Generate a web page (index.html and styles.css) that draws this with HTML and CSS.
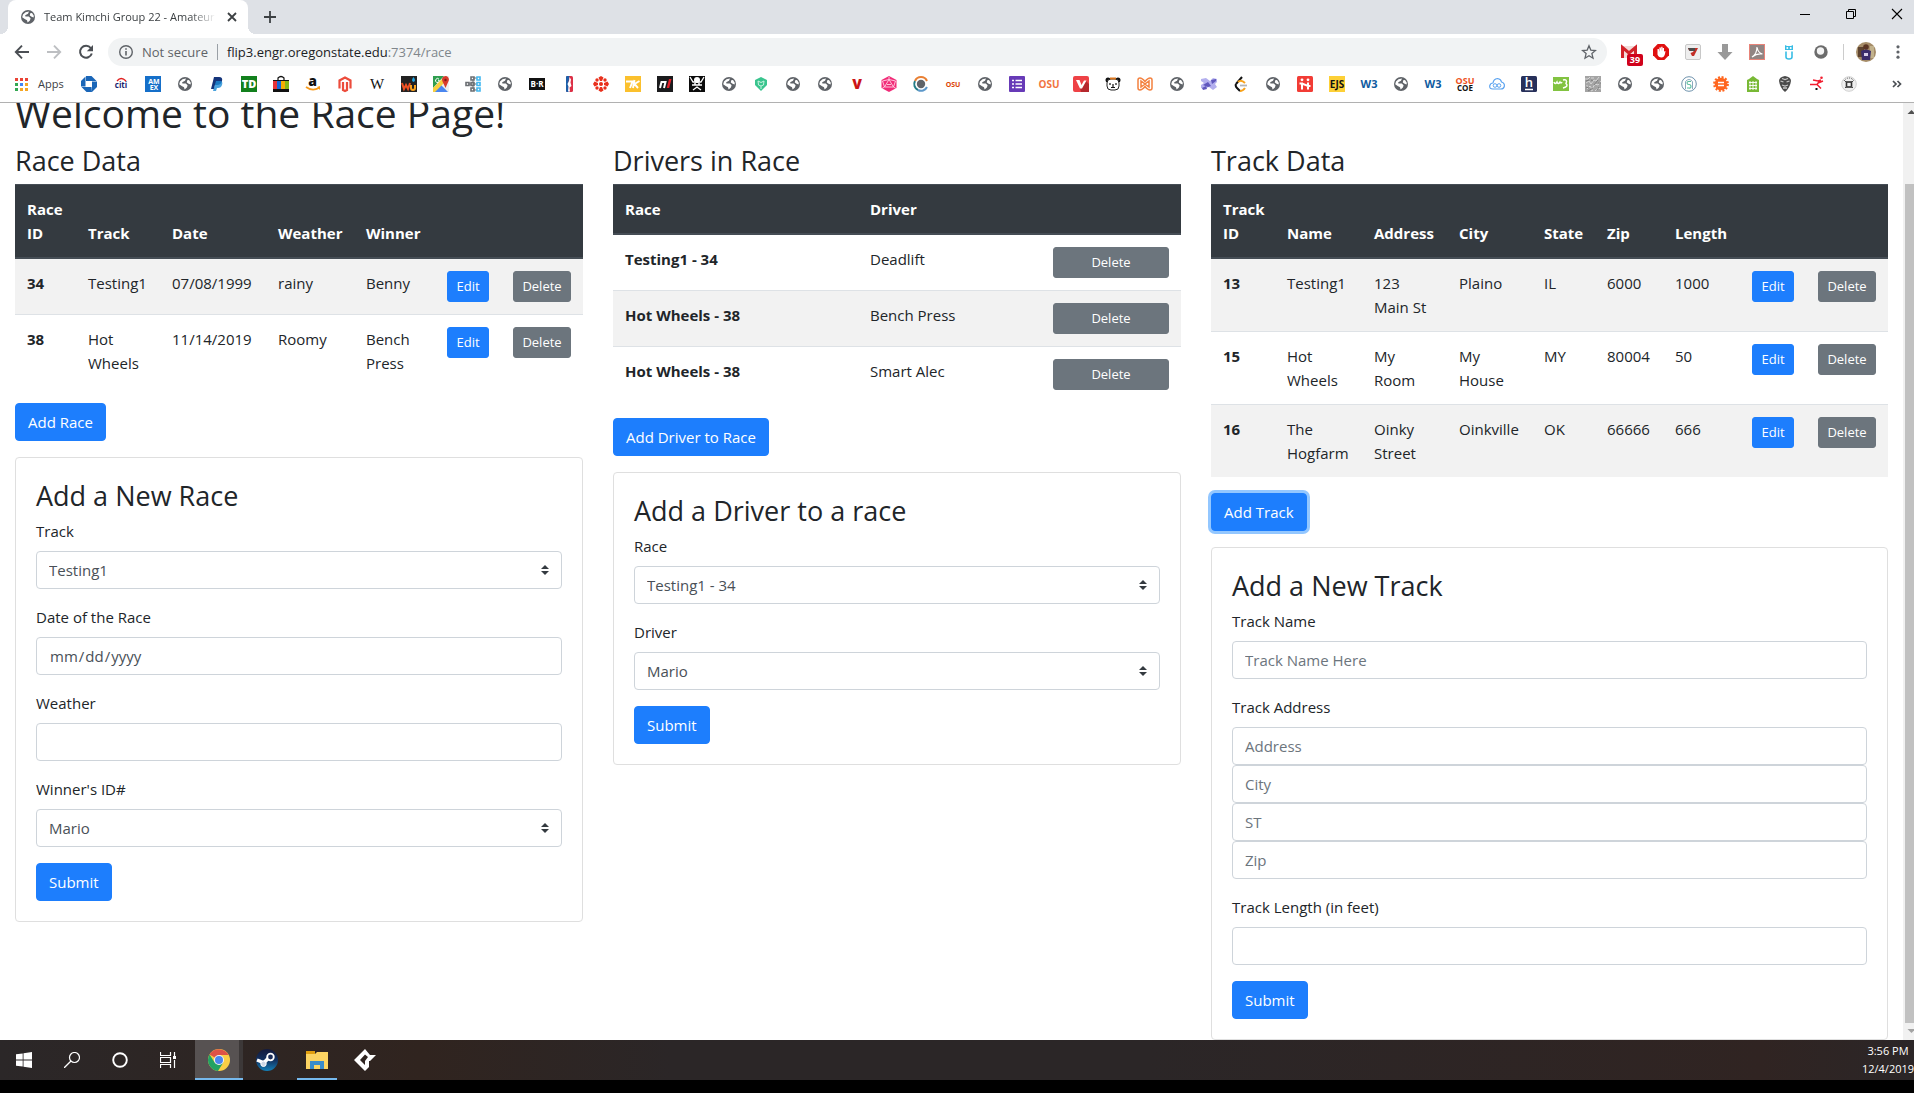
FILE: index.html
```html
<!DOCTYPE html>
<html lang="en">
<head>
<meta charset="utf-8">
<meta name="viewport" content="width=device-width, initial-scale=1">
<title>Team Kimchi Group 22 - Amateur Racing</title>
<link rel="stylesheet" href="styles.css">
</head>
<body>
<svg class="defs" aria-hidden="true">
  <symbol id="globe" viewBox="0 0 16 16"><circle cx="8" cy="8" r="7" fill="#5f6368"/><path d="M3 5.500 5.500 3.200 9 2.600 8 4.800 5.200 6.200 5.400 7.400 8.800 7.600 10.600 9.300 9.900 11.500 7.600 13.600 7 11.200 4.700 10 2.200 8.200ZM10.200 4.200 12 4 13.800 6.800 13.600 8.600 11.600 7.800 9.800 6.400Z" fill="#fff"/></symbol>
</svg>

<header class="browser">
  <div class="tabstrip">
    <div class="tab">
      <svg class="i16" viewBox="0 0 16 16"><use href="#globe"/></svg>
      <span class="tab-title">Team Kimchi Group 22 - Amateur Racing</span>
      <button class="plain" aria-label="Close tab"><svg class="i16" viewBox="0 0 16 16"><path d="M4 4l8 8M12 4l-8 8" stroke="#3c4043" stroke-width="1.8"/></svg></button>
    </div>
    <button class="plain new-tab" aria-label="New tab"><svg class="i16" viewBox="0 0 16 16"><path d="M8 2v12M2 8h12" stroke="#3c4043" stroke-width="1.8"/></svg></button>
    <div class="window-controls">
      <button class="plain" aria-label="Minimize"><svg class="i16" viewBox="0 0 16 16"><path d="M3 8.500h10" stroke="#000"/></svg></button>
      <button class="plain" aria-label="Restore"><svg class="i16" viewBox="0 0 16 16"><path d="M3.500 5.500h7v7h-7zM5.500 5.500v-2h7v7h-2" fill="none" stroke="#000"/></svg></button>
      <button class="plain" aria-label="Close"><svg class="i16" viewBox="0 0 16 16"><path d="M3 3l10 10M13 3l-10 10" stroke="#000" stroke-width="1.1"/></svg></button>
    </div>
  </div>

  <div class="toolbar">
    <div class="nav">
      <button class="plain" aria-label="Back"><svg class="i16" viewBox="0 0 16 16"><path d="M15 8H2M8 1.700 1.800 8 8 14.300" fill="none" stroke="#4b4f54" stroke-width="1.900"/></svg></button>
      <button class="plain" aria-label="Forward"><svg class="i16" viewBox="0 0 16 16"><path d="M1 8h13M8 1.700 14.200 8 8 14.300" fill="none" stroke="#bdbfc2" stroke-width="1.900"/></svg></button>
      <button class="plain" aria-label="Reload"><svg class="i16" viewBox="0 0 16 16"><path d="M12.800 4A6 6 0 1 0 13.800 9.500" fill="none" stroke="#4b4f54" stroke-width="2"/><path d="M15 1v6.200H8.800z" fill="#4b4f54"/></svg></button>
    </div>
    <div class="omnibox">
      <svg class="i16" viewBox="0 0 16 16"><circle cx="8" cy="8" r="6.300" fill="none" stroke="#5f6368" stroke-width="1.400"/><path d="M8 7v4.500M8 4.300v1.500" stroke="#5f6368" stroke-width="1.600"/></svg>
      <span class="secure">Not secure</span>
      <span class="url">flip3.engr.oregonstate.edu<span class="path">:7374/race</span></span>
      <button class="plain star" aria-label="Bookmark"><svg class="i16" viewBox="0 0 16 16"><path d="M8 1.800l1.800 4.300 4.700.4-3.600 3.100 1.100 4.600L8 11.700l-4 2.500 1.100-4.600L1.500 6.500l4.700-.4z" fill="none" stroke="#5f6368" stroke-width="1.300"/></svg></button>
    </div>
    <div class="extensions">
      <div class="mail"><svg class="i16" viewBox="0 0 16 16"><path d="M0 2h16v12H0z" fill="#f3dcda"/><path d="M1.500 14V3.500L8 9l6.500-5.500V14" fill="none" stroke="#d2232a" stroke-width="3"/></svg><span class="count">39</span></div>
      <svg class="i16" viewBox="0 0 16 16"><path d="M4.700 0h6.600L16 4.700v6.600L11.300 16H4.700L0 11.300V4.700z" fill="#e01010"/><path d="M4.500 7v3.500q1 3 4 3 2.500 0 3.500-3.500l.5-3-1.500.5V4H9.800v3.500L9.500 2.700H8.200v4.500L7.800 3.500H6.400V8L5.800 5H4.500z" fill="#fff"/></svg>
      <svg class="i16" viewBox="0 0 16 16"><rect x=".5" y=".5" width="15" height="15" rx="1.500" fill="#eee" stroke="#c8c8c8"/><path d="M3 4h10L9 12H7L5.500 9 8 8 9 6.500H4z" fill="#c32d26"/><path d="M3 4h7v3H4.500z" fill="#4c4c4c"/></svg>
      <svg class="i16" viewBox="0 0 16 16"><path d="M5 0h6v8h4.500L8 16 .5 8H5z" fill="#999"/></svg>
      <svg class="i16" viewBox="0 0 16 16"><rect x=".5" y=".5" width="15" height="15" fill="#918583" stroke="#e88378"/><path d="M3 13q5-3 5-10 1 6 5.500 7Q8 9 3 13z" fill="none" stroke="#fff" stroke-width="1.200"/></svg>
      <svg class="i16" viewBox="0 0 16 16"><path d="M5 7.500v5.500q0 2 3 2t3-2V7.500" fill="none" stroke="#39bde5" stroke-width="1.600"/><path d="M4 1l2 1h4l2-1v5H4z" fill="#39bde5"/><circle cx="6.300" cy="4" r="1" fill="#fff"/><circle cx="9.700" cy="4" r="1" fill="#fff"/></svg>
      <svg class="i16" viewBox="0 0 16 16"><circle cx="8" cy="8" r="6.700" fill="#6c6c6c"/><circle cx="7.500" cy="7" r="3.700" fill="#f4f4f4"/></svg>
    </div>
    <div class="profile">
      <svg class="avatar" viewBox="0 0 20 20"><circle cx="10" cy="10" r="10" fill="#a58c68"/><path d="M2 5h6v10H2z" fill="#5d4330"/><path d="M14 4h4v12h-4z" fill="#c2b28c"/><circle cx="10" cy="5" r="2.800" fill="#5a3524"/><path d="M5 9q5-3 10 0l-1 9H6z" fill="#3b2d6b"/><path d="M8 11h4v3H8z" fill="#d8cfe8"/></svg>
      <button class="plain" aria-label="Menu"><svg class="i16" viewBox="0 0 16 16"><g fill="#5f6368"><circle cx="8" cy="2.800" r="1.600"/><circle cx="8" cy="8" r="1.600"/><circle cx="8" cy="13.200" r="1.600"/></g></svg></button>
    </div>
  </div>

  <nav class="bookmarks" aria-label="Bookmarks">
    <a class="apps" href="#"><svg class="apps-grid" viewBox="0 0 13 13"><path d="M0 0h3v3H0zM5 0h3v3H5zM10 0h3v3h-3z" fill="#ea4335"/><path d="M0 5h3v3H0zM0 10h3v3H0z" fill="#34a853"/><path d="M5 5h3v3H5z" fill="#4285f4"/><path d="M10 5h3v3h-3zM5 10h3v3H5zM10 10h3v3h-3z" fill="#f5a623"/></svg>Apps</a>
    <a href="#"><svg viewBox="0 0 16 16"><g fill="#1a66b8"><path d="M5 0h5.500l5 5H5z"/><path d="M16 5.500v5.500l-5 5V5.500z"/><path d="M11 16H5.500l-5-5H10.500z"/><path d="M0 10.500V5l4.500-4.500v10z"/></g><path d="M5.500 5.500h5v5h-5z" fill="#fff"/></svg></a>
    <a href="#"><svg viewBox="0 0 16 16"><text x="8" y="12" class="t" font-size="8" font-weight="700" fill="#1a1f71">citi</text><path d="M4 5q4-5 9 0" fill="none" stroke="#e02020" stroke-width="1.300"/></svg></a>
    <a href="#"><svg viewBox="0 0 16 16"><path d="M0 0h16v16H0z" fill="#156fc9"/><text x="9" y="8" class="t" font-size="7" font-weight="700" fill="#fff">AM</text><text x="9" y="14" class="t" font-size="7" font-weight="700" fill="#fff">EX</text></svg></a>
    <a href="#"><svg viewBox="0 0 16 16"><use href="#globe"/></svg></a>
    <a href="#"><svg viewBox="0 0 16 16"><path d="M5 1h5q4 0 3 4t-5 4H6l-1 4H2z" fill="#14347a"/><path d="M7 5h5q2 1 1 4t-4 3H8l-1 3H4z" fill="#1b8bd4" opacity=".8"/></svg></a>
    <a href="#"><svg viewBox="0 0 16 16"><path d="M0 0h16v16H0z" fill="#12801d"/><text x="8" y="12" class="t" font-size="11" font-weight="800" fill="#fff">TD</text></svg></a>
    <a href="#"><svg viewBox="0 0 16 16"><path d="M5 5V2q3-3 6 0v3" fill="none" stroke="#111" stroke-width="1.200"/><path d="M0 4h16v12H0z" fill="#111"/><path d="M0 5h4v8H0z" fill="#e53238"/><path d="M4 5h4v8H4z" fill="#1468d8"/><path d="M8 5h4v8H8z" fill="#f5af02"/><path d="M12 5h4v8h-4z" fill="#86b817"/></svg></a>
    <a href="#"><svg viewBox="0 0 16 16"><text x="7.500" y="10" class="t" font-size="14" font-weight="800" fill="#111">a</text><path d="M1 11q6 4.500 13 1" fill="none" stroke="#f79a1c" stroke-width="1.700"/><path d="M15 10v4l-3-3z" fill="#f79a1c"/></svg></a>
    <a href="#"><svg viewBox="0 0 16 16"><path d="M2.500 12.500v-8L8 1.500l5.500 3v8M6 6v8l2 1 2-1V6" fill="none" stroke="#ec4c3c" stroke-width="2.200"/></svg></a>
    <a href="#"><svg viewBox="0 0 16 16"><text x="8" y="13" class="serif" font-size="15" fill="#111">W</text></svg></a>
    <a href="#"><svg viewBox="0 0 16 16"><path d="M0 0h16v16H0z" fill="#222"/><path d="M1 7l2 6 2-4 2 4 2-6" fill="none" stroke="#f05023" stroke-width="2"/><path d="M10 9v3q0 2 2 2t2-2V9" fill="none" stroke="#f9a01b" stroke-width="2"/><path d="M12.500 1q3 4 0 5-3-1 0-5" fill="#20a7e8"/></svg></a>
    <a href="#"><svg viewBox="0 0 16 16"><path d="M0 0h16v16H0z" fill="#eef0ee"/><path d="M0 0h11L0 12z" fill="#2f9e4f"/><path d="M6 3.200a2 2 0 1 0 .5 1.500H5" fill="none" stroke="#fff"/><path d="M1 16l7-7 7 7z" fill="#4a86ef"/><path d="M0 12L9 3l2 4L2 16H0z" fill="#f7cf3e"/><path d="M12.500 0a3.500 3.500 0 0 1 3.300 4.500L12.500 12 9.300 5A3.500 3.500 0 0 1 12.500 0z" fill="#d83b2c"/><circle cx="12.500" cy="4" r="1.200" fill="#7d1d14"/></svg></a>
    <a href="#"><svg viewBox="0 0 16 16"><path d="M3 8h4M8 3v10M8 2h4M8 8h4M8 14h4" stroke="#6b6f73"/><g fill="none" stroke="#6b6f73" stroke-width="1.600"><path d="M1 6.500h3v3H1zM6 1h3v3H6zM6 6.500h3v3H6zM6 12h3v3H6z"/></g><g fill="none" stroke="#43b8f0" stroke-width="1.600"><path d="M12 1h3v3h-3zM12 6.500h3v3h-3zM12 12h3v3h-3z"/></g></svg></a>
    <a href="#"><svg viewBox="0 0 16 16"><use href="#globe"/></svg></a>
    <a href="#"><svg viewBox="0 0 16 16"><path d="M0 2h16v12H0z" fill="#111"/><text x="8" y="11" class="t" font-size="8" font-weight="700" fill="#fff">B·R</text></svg></a>
    <a href="#"><svg viewBox="0 0 16 16"><rect x="5" y="0" width="7" height="16" rx="1.500" fill="#dc3046"/><path d="M6 0h2.500L7.500 6 8 16H6q-1 0-1-1V1q0-1 1-1z" fill="#1d5fa8"/><path d="M8.500 1l1.500 2.500-.5 3 1 3.500-2 1.500.5 4H7l.5-5L6.500 8 8 5z" fill="#fff"/></svg></a>
    <a href="#"><svg viewBox="0 0 16 16"><g fill="#e9301c"><path d="M8 0l2.500 1.500L9 5H7L5.500 1.500zM8 16l2.500-1.500L9 11H7l-1.500 3.500zM0 8l1.500-2.500L5 7v2l-3.500 1.500zM16 8l-1.500-2.500L11 7v2l3.500 1.500z"/><circle cx="4" cy="4" r="1.700"/><circle cx="12" cy="4" r="1.700"/><circle cx="4" cy="12" r="1.700"/><circle cx="12" cy="12" r="1.700"/><circle cx="8" cy="8" r="2"/></g></svg></a>
    <a href="#"><svg viewBox="0 0 16 16"><path d="M0 0h16v16H0z" fill="#fbc02d"/><path d="M1 5.500h6.500L5 12M14.500 5L9.500 8l3.500 4M9.500 4L8 12" fill="none" stroke="#fff" stroke-width="1.900"/></svg></a>
    <a href="#"><svg viewBox="0 0 16 16"><path d="M0 0h16v16H0z" fill="#1b1b1d"/><path d="M3 12l1.500-6h4L7 12" fill="none" stroke="#fff" stroke-width="2"/><path d="M12 3h2.500l-2.300 9H9.700z" fill="#e3202a"/></svg></a>
    <a href="#"><svg viewBox="0 0 16 16"><path d="M0 0h16v16H0z" fill="#0b0b0b"/><circle cx="8" cy="4" r="3" fill="#fff"/><path d="M1 1l3 5h8l3-5M3 9h10M4 14l4-3 4 3" fill="none" stroke="#fff" stroke-width="1.300"/><circle cx="6" cy="8" r="1" fill="#fff"/><circle cx="10" cy="8" r="1" fill="#fff"/></svg></a>
    <a href="#"><svg viewBox="0 0 16 16"><use href="#globe"/></svg></a>
    <a href="#"><svg viewBox="0 0 16 16"><path d="M2 4l6-3 6 3v5l-6 6-6-6z" fill="#39c48e"/><path d="M5 5l3 1.500L11 5M5 5l.5 4L8 10l2.500-1 .5-4M8 10v3" fill="none" stroke="#c9f3e0"/></svg></a>
    <a href="#"><svg viewBox="0 0 16 16"><use href="#globe"/></svg></a>
    <a href="#"><svg viewBox="0 0 16 16"><use href="#globe"/></svg></a>
    <a href="#"><svg viewBox="0 0 16 16"><text x="8" y="13" class="t" font-size="14" font-weight="800" fill="#cc1417">V</text></svg></a>
    <a href="#"><svg viewBox="0 0 16 16"><path d="M8 0l7.500 4v8L8 16 .5 12V4z" fill="#f12c78"/><path d="M8 3.500L3.500 11h9zM8 3.500V1M3.500 11L1 12.500M12.500 11l2.500 1.500M6 8.500h4M3.500 11L1.500 5 8 3.500 14.500 5l-2 6" fill="none" stroke="#ffd0e2" stroke-width=".9"/></svg></a>
    <a href="#"><svg viewBox="0 0 16 16"><g fill="none" stroke-width="2"><path d="M2 5a6.500 6.500 0 0 1 12 0" stroke="#e98034"/><path d="M2 5a6.500 6.500 0 0 0 3 9" stroke="#237c86"/><path d="M5 14a6.500 6.500 0 0 0 9-3" stroke="#5d98ca"/></g><circle cx="8" cy="8" r="4.200" fill="#5f6368"/></svg></a>
    <a href="#"><svg viewBox="0 0 16 16"><text x="8" y="11" class="t" font-size="7" font-weight="700" fill="#dc4405">OSU</text></svg></a>
    <a href="#"><svg viewBox="0 0 16 16"><use href="#globe"/></svg></a>
    <a href="#"><svg viewBox="0 0 16 16"><rect width="16" height="16" rx="1" fill="#673ab7"/><path d="M3 4.500h2M6.500 4.500H13M3 8h2M6.500 8H13M3 11.500h2M6.500 11.500H13" stroke="#fff" stroke-width="1.700"/></svg></a>
    <a href="#"><svg viewBox="0 0 16 16"><text x="8" y="12" class="narrow-text" font-size="10" font-weight="700" fill="#f1743f">OSU</text></svg></a>
    <a href="#"><svg viewBox="0 0 16 16"><rect width="16" height="16" rx="2" fill="#ee4246"/><path d="M13 5l3 3v8H8l-1-4z" fill="#b5282e"/><path d="M3 4h3.500l2 5L11 4.500h2.500L9 12.500H7z" fill="#fff"/></svg></a>
    <a href="#"><svg viewBox="0 0 16 16"><circle cx="3" cy="4" r="2.500" fill="#111"/><circle cx="13" cy="4" r="2.500" fill="#111"/><rect x="2" y="3" width="12" height="11" rx="4" fill="#fff" stroke="#222"/><path d="M5 2.500h6" stroke="#d8741d" stroke-width="2" fill="none"/><path d="M5 7v2M11 7v2M6 11.500h4M8 8v3" stroke="#111" stroke-width="1.200"/></svg></a>
    <a href="#"><svg viewBox="0 0 16 16"><g fill="none" stroke="#f4813f" stroke-width="1.500"><path d="M1 4q0-2 2-2 2 0 5 3.500Q11 2 13 2q2 0 2 2v8q0 2-2 2-2 0-5-3.500Q5 14 3 14q-2 0-2-2z"/><path d="M4 5v6l4-3zM12 5v6L8 8z"/></g></svg></a>
    <a href="#"><svg viewBox="0 0 16 16"><use href="#globe"/></svg></a>
    <a href="#"><svg viewBox="0 0 16 16"><path d="M0 3l5-1 4 3 3-3 4 1v3l-2 2 2 3-4 3-4-3-5 2-3-1v-3l3-2-3-2z" fill="#b3afee"/><path d="M2 9l5-3 3 4-3 1zM10 4l5-1v2l-4 3zM1 12l4-2 1 3-4 1z" fill="#6058bd"/></svg></a>
    <a href="#"><svg viewBox="0 0 16 16"><path d="M9 1L3 8" stroke="#111" stroke-width="2"/><path d="M3 8q-1 2 1 4l3 3" fill="none" stroke="#111" stroke-width="2"/><path d="M5 6q3-3 7 1M7 15q3 0 5-3" fill="none" stroke="#f8a21a" stroke-width="2"/><path d="M7 9.500h7" stroke="#b3b3b3" stroke-width="1.800"/></svg></a>
    <a href="#"><svg viewBox="0 0 16 16"><use href="#globe"/></svg></a>
    <a href="#"><svg viewBox="0 0 16 16"><rect width="16" height="16" rx="1.500" fill="#f23c35"/><path d="M5 6.500v7M11 6.500v7M2.500 7.500H5l6 2.500h2.500" fill="none" stroke="#fff" stroke-width="2"/><circle cx="5" cy="3.800" r="1.400" fill="#fff"/><circle cx="11" cy="3.800" r="1.400" fill="#fff"/></svg></a>
    <a href="#"><svg viewBox="0 0 16 16"><path d="M0 0h16v16H0z" fill="#fdd036"/><text x="8" y="12" class="narrow-text" font-size="10" font-weight="700" fill="#111">EJS</text></svg></a>
    <a href="#"><svg viewBox="0 0 16 16"><text x="8" y="12" class="narrow-text" font-size="11" font-weight="700" fill="#0f5b9f">W3</text></svg></a>
    <a href="#"><svg viewBox="0 0 16 16"><use href="#globe"/></svg></a>
    <a href="#"><svg viewBox="0 0 16 16"><text x="8" y="12" class="narrow-text" font-size="11" font-weight="700" fill="#0f5b9f">W3</text></svg></a>
    <a href="#"><svg viewBox="0 0 16 16"><text x="8" y="8" class="narrow-text" font-size="9" font-weight="700" fill="#ee5322">OSU</text><text x="8" y="15" class="narrow-text" font-size="8" font-weight="700" fill="#111">COE</text></svg></a>
    <a href="#"><svg viewBox="0 0 16 16"><path d="M4 13Q0 13 .8 9.500 1.500 7 4 7q.5-4 4.500-4.500Q12 3 12.500 6q3.500 1 2.800 4.500Q14.500 13 12 13z" fill="none" stroke="#5ba3f0" stroke-width="1.200"/><circle cx="6" cy="9.500" r="1.800" fill="none" stroke="#5ba3f0"/><circle cx="10" cy="9.500" r="1.800" fill="none" stroke="#5ba3f0"/></svg></a>
    <a href="#"><svg viewBox="0 0 16 16"><rect width="16" height="16" rx="1.500" fill="#27305a"/><text x="8" y="11" class="t" font-size="13" font-weight="600" fill="#fff">h</text><path d="M4 13.500h8" stroke="#fff" stroke-width="1.500"/></svg></a>
    <a href="#"><svg viewBox="0 0 16 16"><path d="M0 1h16v14H0z" fill="#82c341"/><path d="M1 6q1 3 3 0 1 3 3 0 1 2 2 0M10 4q5-1 3 3.500 3 3-3 4.500" fill="none" stroke="#fff" stroke-width="1.500"/></svg></a>
    <a href="#"><svg viewBox="0 0 16 16"><path d="M0 0h16v16H0z" fill="#a4a4a4"/><path d="M0 3h3l2-2M1 7l3-2 2 3 3-4 2 1 3-4M2 13l3-3 2 3 3-5 3 1 3-4M10 15l3-3 3 1M6 2h3M1 10h2M6 15l2-1" fill="none" stroke="#d6d6d6"/><path d="M1 5l3-1M1 11l3 1M6 4l2 1M9 9l4-5M3 15l5-3M12 14l2-3M13 7h3" stroke="#7e7e7e"/></svg></a>
    <a href="#"><svg viewBox="0 0 16 16"><use href="#globe"/></svg></a>
    <a href="#"><svg viewBox="0 0 16 16"><use href="#globe"/></svg></a>
    <a href="#"><svg viewBox="0 0 16 16"><circle cx="8" cy="8" r="7.300" fill="none" stroke="#6f93ad"/><path d="M4.500 13V5.500q3.500-4 7 0V13" fill="none" stroke="#8aa9bd"/><path d="M10 5.500H7.500Q6 5.500 6 7t2 1.500T10 10.500 8 12H6" fill="none" stroke="#57bd9b" stroke-width="1.100"/></svg></a>
    <a href="#"><svg viewBox="0 0 16 16"><circle cx="8" cy="8" r="6.300" fill="#ff661f"/><circle cx="8" cy="8" r="6.800" fill="none" stroke="#ff661f" stroke-width="2.200" stroke-dasharray="2 1.600"/><path d="M5 6.500h6M5 9.500h6" stroke="#fff" stroke-width="1.600"/></svg></a>
    <a href="#"><svg viewBox="0 0 16 16"><path d="M2 16V4l2-1 4-3 4 3 2 1v12z" fill="#78b935"/><path d="M4 6.500h8M4 9.500h8M4 12.500h8M5 5v9M8 5v9M11 5v9" stroke="#fff" stroke-width=".9"/></svg></a>
    <a href="#"><svg viewBox="0 0 16 16"><path d="M8 0q6 1 6 5-1 7-6 11Q3 12 2 5q0-4 6-5z" fill="#4a4a4a"/><path d="M3.500 5l3 1M12.500 5l-3 1M5 9l3 1 3-1M6 12h4M5 2.500l3 1 3-1" fill="none" stroke="#c7c7c7" stroke-width="1.300"/></svg></a>
    <a href="#"><svg viewBox="0 0 16 16"><path d="M1 8.500h7l3-4M8 8.500l4 4M9 7l5-2M4 4l5 1 3-1" fill="none" stroke="#f21d2f" stroke-width="1.500"/><circle cx="12.500" cy="1.800" r="1.300" fill="#f21d2f"/><path d="M6.500 12h2v2h-2z" fill="#111"/></svg></a>
    <a href="#"><svg viewBox="0 0 16 16"><circle cx="8" cy="8" r="7.300" fill="#f0f0f0" stroke="#d2d2d2"/><path d="M3 5q2-3 5-3t5 3" fill="none" stroke="#555" stroke-dasharray="1 1"/><rect x="5.500" y="6" width="5" height="5" fill="none" stroke="#333" stroke-width="1.600"/><path d="M3.500 4.500l2 2M12.500 4.500l-2 2M4 12l2-2M12 12l-2-2" stroke="#444"/></svg></a>
    <button class="plain more" aria-label="More bookmarks"><svg class="i16" viewBox="0 0 16 16"><path d="M4 5l3 3-3 3M8.500 5l3 3-3 3" fill="none" stroke="#4b4f54" stroke-width="1.700"/></svg></button>
  </nav>
</header>

<div class="viewport">
  <main class="page">
    <h1>Welcome to the Race Page!</h1>
    <div class="columns">
      <section>
        <h2>Race Data</h2>
        <table class="odd">
          <colgroup><col class="w61"><col class="w84"><col class="w106"><col class="w88"><col class="w81"><col class="w66"><col class="w82"></colgroup>
          <thead><tr><th>Race ID</th><th>Track</th><th>Date</th><th>Weather</th><th>Winner</th><th></th><th></th></tr></thead>
          <tbody>
            <tr><th>34</th><td>Testing1</td><td>07/08/1999</td><td>rainy</td><td>Benny</td><td><button class="btn small">Edit</button></td><td><button class="btn small grey">Delete</button></td></tr>
            <tr><th>38</th><td>Hot Wheels</td><td>11/14/2019</td><td>Roomy</td><td>Bench Press</td><td><button class="btn small">Edit</button></td><td><button class="btn small grey">Delete</button></td></tr>
          </tbody>
        </table>
        <button class="btn">Add Race</button>
        <form class="card">
          <h2>Add a New Race</h2>
          <div class="group"><label for="race-track">Track</label><select id="race-track" class="control"><option>Testing1</option><option>Hot Wheels</option><option>The Hogfarm</option></select></div>
          <div class="group"><label for="race-date">Date of the Race</label><input id="race-date" class="control" type="date"></div>
          <div class="group"><label for="race-weather">Weather</label><input id="race-weather" class="control" type="text"></div>
          <div class="group"><label for="race-winner">Winner's ID#</label><select id="race-winner" class="control"><option>Mario</option></select></div>
          <button class="btn" type="button">Submit</button>
        </form>
      </section>

      <section>
        <h2>Drivers in Race</h2>
        <table class="even">
          <colgroup><col class="w245"><col class="w183"><col class="w140"></colgroup>
          <thead><tr><th>Race</th><th>Driver</th><th></th></tr></thead>
          <tbody>
            <tr><th>Testing1 - 34</th><td>Deadlift</td><td><button class="btn small grey">Delete</button></td></tr>
            <tr><th>Hot Wheels - 38</th><td>Bench Press</td><td><button class="btn small grey">Delete</button></td></tr>
            <tr><th>Hot Wheels - 38</th><td>Smart Alec</td><td><button class="btn small grey">Delete</button></td></tr>
          </tbody>
        </table>
        <button class="btn">Add Driver to Race</button>
        <form class="card">
          <h2>Add a Driver to a race</h2>
          <div class="group"><label for="driver-race">Race</label><select id="driver-race" class="control"><option>Testing1 - 34</option><option>Hot Wheels - 38</option></select></div>
          <div class="group"><label for="driver-name">Driver</label><select id="driver-name" class="control"><option>Mario</option></select></div>
          <button class="btn" type="button">Submit</button>
        </form>
      </section>

      <section>
        <h2>Track Data</h2>
        <table class="odd">
          <colgroup><col class="w64"><col class="w87"><col class="w85"><col class="w85"><col class="w63"><col class="w68"><col class="w77"><col class="w66"><col class="w82"></colgroup>
          <thead><tr><th>Track ID</th><th>Name</th><th>Address</th><th>City</th><th>State</th><th>Zip</th><th>Length</th><th></th><th></th></tr></thead>
          <tbody>
            <tr><th>13</th><td>Testing1</td><td>123 Main St</td><td>Plaino</td><td>IL</td><td>6000</td><td>1000</td><td><button class="btn small">Edit</button></td><td><button class="btn small grey">Delete</button></td></tr>
            <tr><th>15</th><td>Hot Wheels</td><td>My Room</td><td>My House</td><td>MY</td><td>80004</td><td>50</td><td><button class="btn small">Edit</button></td><td><button class="btn small grey">Delete</button></td></tr>
            <tr><th>16</th><td>The Hogfarm</td><td>Oinky Street</td><td>Oinkville</td><td>OK</td><td>66666</td><td>666</td><td><button class="btn small">Edit</button></td><td><button class="btn small grey">Delete</button></td></tr>
          </tbody>
        </table>
        <button class="btn focused">Add Track</button>
        <form class="card">
          <h2>Add a New Track</h2>
          <div class="group"><label for="track-name">Track Name</label><input id="track-name" class="control" type="text" placeholder="Track Name Here"></div>
          <div class="group"><label for="track-address">Track Address</label><input id="track-address" class="control" type="text" placeholder="Address"><input class="control" type="text" placeholder="City" aria-label="City"><input class="control" type="text" placeholder="ST" aria-label="State"><input class="control" type="text" placeholder="Zip" aria-label="Zip"></div>
          <div class="group"><label for="track-length">Track Length (in feet)</label><input id="track-length" class="control" type="text"></div>
          <button class="btn" type="button">Submit</button>
        </form>
      </section>
    </div>
  </main>
  <div class="scrollbar" aria-hidden="true">
    <svg class="arrow" viewBox="0 0 17 17"><path d="M4.500 11l4-4 4 4z" fill="#505050"/></svg>
    <div class="track"><div class="thumb"></div></div>
    <svg class="arrow" viewBox="0 0 17 17"><path d="M4.500 6l4 4 4-4z" fill="#a3a3a3"/></svg>
  </div>
</div>

<footer class="taskbar">
  <button class="task" aria-label="Start"><svg class="i16" viewBox="0 0 16 16"><path d="M0 2.300l6.700-.9v6.200H0zM7.500 1.300L16 0v7.600H7.500zM0 8.400h6.700v6.200L0 13.700zM7.500 8.400H16V16l-8.500-1.300z" fill="#fff"/></svg></button>
  <button class="task" aria-label="Search"><svg class="i16" viewBox="0 0 16 16"><circle cx="10.500" cy="5.500" r="5" fill="none" stroke="#fff" stroke-width="1.200"/><path d="M7 9L0 16" stroke="#fff" stroke-width="1.300"/></svg></button>
  <button class="task" aria-label="Cortana"><svg class="i16" viewBox="0 0 16 16"><circle cx="8" cy="8" r="6.800" fill="none" stroke="#fff" stroke-width="1.900"/></svg></button>
  <button class="task" aria-label="Task View"><svg class="i16" viewBox="0 0 16 16"><path d="M.5 0v3.500h10V0M.5 16v-3.500h10V16M.5 5.500h10v5H.5zM14.500 0v4M14.500 8v8" fill="none" stroke="#fff" stroke-width="1.200"/><path d="M13 4h3v3h-3z" fill="#fff"/></svg></button>
  <button class="task running active" aria-label="Chrome"><svg class="i22" viewBox="0 0 22 22"><circle cx="11" cy="11" r="11" fill="#f9cf45"/><path d="M11 11L1.500 5.500A11 11 0 0 1 20.500 5.700L20 6H11z" fill="#de5246"/><path d="M1.500 5.500A11 11 0 0 0 10 22l5.300-8.500L11 11 6.700 13.500z" fill="#21a264"/><circle cx="11" cy="11" r="5" fill="#f3f3f3"/><circle cx="11" cy="11" r="4" fill="#4a86ee"/></svg></button>
  <button class="task" aria-label="Steam"><svg class="i22" viewBox="0 0 22 22"><defs><linearGradient id="steam" x1="0" y1="0" x2="0" y2="1"><stop offset="0" stop-color="#141a3c"/><stop offset=".5" stop-color="#12305f"/><stop offset="1" stop-color="#1380b8"/></linearGradient></defs><circle cx="11" cy="11" r="11" fill="url(#steam)"/><path d="M1 11l7 2.800L12.500 9" fill="none" stroke="#fff" stroke-width="3.500"/><circle cx="7.500" cy="14.800" r="2.700" fill="#cfd8e6" stroke="#fff"/><circle cx="14.500" cy="8" r="3.300" fill="#1a2c58" stroke="#fff" stroke-width="1.800"/></svg></button>
  <button class="task running narrow" aria-label="File Explorer"><svg class="i22" viewBox="0 0 22 22"><path d="M0 2h9v4H0z" fill="#e2a00f"/><path d="M0 5h9l2-2h11v17H0z" fill="#fcd462"/><path d="M4 20v-8h14v8h-4v-4H8v4z" fill="#3a8ccb"/></svg></button>
  <button class="task" aria-label="GameMaker"><svg class="i22" viewBox="0 0 22 22"><path d="M11 0l5 6h6l-6 6h-5l3-4-3-2.500L6 11l5 5v-4h4v6l-4 4L0 11z" fill="#fff"/></svg></button>
  <div class="clock"><span>3:56 PM</span><span>12/4/2019</span></div>
</footer>
</body>
</html>
```
FILE: styles.css
```css
* { box-sizing: border-box; }

body {
  margin: 0;
  height: 100vh;
  display: flex;
  flex-direction: column;
  padding-bottom: 13px;
  overflow: hidden;
  background: #000;
  color: #212529;
  font: 15px/24px "Open Sans", "Segoe UI", sans-serif;
}

button, input, select { font: inherit; }
svg { display: block; flex: none; }
.defs { position: absolute; width: 0; height: 0; }
.i16 { width: 16px; height: 16px; }
.i22 { width: 22px; height: 22px; }
.plain { border: 0; padding: 0; background: none; }
.t { font-family: "Open Sans", sans-serif; text-anchor: middle; }
.serif { font-family: "Liberation Serif", serif; text-anchor: middle; }
.narrow-text { font-family: "Liberation Sans Narrow", "Open Sans", sans-serif; text-anchor: middle; }

/* Browser frame */
.browser { flex: none; background: #fff; border-bottom: 1px solid #b1b1b1; font-size: 12px; }
.tabstrip { display: flex; align-items: center; height: 34px; padding-left: 8px; background: #dee1e6; }
.tab {
  position: relative;
  display: flex;
  align-items: center;
  gap: 8px;
  width: 240px;
  height: 34px;
  padding: 0 8px 0 12px;
  border-radius: 8px 8px 0 0;
  background: #fff;
  color: #3c4043;
}
.tab::before, .tab::after { content: ""; position: absolute; bottom: 0; width: 8px; height: 8px; }
.tab::before { right: 100%; background: radial-gradient(circle at 0 0, transparent 8px, #fff 8px); }
.tab::after { left: 100%; background: radial-gradient(circle at 100% 0, transparent 8px, #fff 8px); }
.tab-title {
  flex: 1;
  overflow: hidden;
  white-space: nowrap;
  font-size: 11px;
  mask-image: linear-gradient(to right, #000 85%, transparent);
}
.new-tab { margin-left: 14px; }
.window-controls { display: flex; gap: 30px; margin-left: auto; padding: 0 9px 6px 0; }

.toolbar { display: flex; align-items: center; height: 36px; padding: 0 8px 0 14px; }
.nav { display: flex; gap: 16px; }
.omnibox {
  flex: 1;
  display: flex;
  align-items: center;
  height: 28px;
  margin: 0 14px;
  padding: 0 10px;
  border-radius: 14px;
  background: #f1f3f4;
  font-size: 13px;
  line-height: 16px;
}
.secure { margin: 0 9px 0 8px; padding-right: 9px; border-right: 1px solid #9aa0a6; color: #5f6368; }
.url { color: #202124; }
.path { color: #80868b; }
.star { margin-left: auto; }
.extensions { display: flex; gap: 16px; padding-right: 14px; border-right: 1px solid #ccc; }
.mail { position: relative; }
.count {
  position: absolute;
  left: 6px;
  top: 10px;
  width: 16px;
  border-radius: 2px;
  background: #d0021b;
  color: #fff;
  font-size: 9px;
  font-weight: 700;
  line-height: 12px;
  text-align: center;
}
.profile { display: flex; align-items: center; gap: 14px; padding-left: 12px; }
.avatar { width: 20px; height: 20px; }

.bookmarks { display: flex; align-items: center; gap: 16px; height: 32px; padding: 0 9px 4px 15px; }
.bookmarks svg { width: 16px; height: 16px; overflow: visible; }
.apps { display: flex; align-items: center; gap: 10px; width: 50px; color: #3c4043; text-decoration: none; font-size: 11px; line-height: 16px; }
.bookmarks .apps-grid { width: 13px; height: 13px; }
.more { margin-left: auto; }

/* Page viewport */
.viewport { flex: 1; min-height: 0; display: flex; overflow: hidden; background: #fff; }
.page { flex: 1; margin-top: -16px; }
h1, h2 { margin: 0; font-weight: 500; }
h1 { padding-left: 15px; margin-bottom: 4px; font-size: 39px; line-height: 52px; }
h2 { margin-bottom: 6px; font-size: 27px; line-height: 35px; }
.columns { display: grid; grid-template-columns: 598fr 598fr 707fr; }
section { padding: 0 15px; }

table { width: 100%; margin-bottom: 16px; table-layout: fixed; border-collapse: collapse; }
th, td { padding: 12px; border-top: 1px solid #dee2e6; text-align: left; vertical-align: top; }
thead { background: #343a40; color: #fff; }
thead th { border-top-color: #454d55; border-bottom: 2px solid #454d55; vertical-align: bottom; }
.odd tbody tr:nth-child(odd), .even tbody tr:nth-child(even) { background: #f2f2f2; }
.w61 { width: 61px; }
.w63 { width: 63px; }
.w64 { width: 64px; }
.w66 { width: 66px; }
.w68 { width: 68px; }
.w77 { width: 77px; }
.w81 { width: 81px; }
.w82 { width: 82px; }
.w84 { width: 84px; }
.w85 { width: 85px; }
.w87 { width: 87px; }
.w88 { width: 88px; }
.w106 { width: 106px; }
.w140 { width: 140px; }
.w183 { width: 183px; }
.w245 { width: 245px; }

.btn {
  display: block;
  padding: 6px 12px;
  border: 1px solid #1d7efd;
  border-radius: 4px;
  background: #1d7efd;
  color: #fff;
}
.small { width: 100%; padding: 4px 0; border-radius: 3px; font-size: 13px; line-height: 21px; }
.grey { border-color: #6c757d; background: #6c757d; }
.focused { box-shadow: 0 0 0 3px #93c7ff; }

.card { margin-top: 16px; padding: 20px; border: 1px solid #dfdfdf; border-radius: 4px; }
.group { margin-bottom: 16px; }
label { display: block; margin-bottom: 8px; }
.control {
  display: block;
  width: 100%;
  height: 38px;
  padding: 6px 12px;
  border: 1px solid #ced4da;
  border-radius: 4px;
  background: #fff;
  color: #495057;
}
.control::placeholder { color: #6c757d; }
.control::-webkit-calendar-picker-indicator { display: none; }
select.control {
  appearance: none;
  background: #fff url("data:image/svg+xml,%3csvg xmlns='http://www.w3.org/2000/svg' viewBox='0 0 4 5'%3e%3cpath fill='%23343a40' d='M2 0L0 2h4zm0 5L0 3h4z'/%3e%3c/svg%3e") no-repeat right 12px center / 8px 10px;
}

.scrollbar { flex: none; display: flex; flex-direction: column; width: 11px; overflow: hidden; background: #f1f1f1; }
.arrow { width: 17px; height: 17px; }
.track { flex: 1; padding: 64px 0 0 2px; }
.thumb { height: 100%; background: #c1c1c1; }

/* Taskbar */
.taskbar { flex: none; display: flex; height: 40px; background: linear-gradient(to right, #2b2728, #30241f 22%, #2b2627 35%, #2b2627 60%, #302422 92%, #2b2627); color: #fff; }
.task { display: grid; place-items: center; width: 48px; padding: 0; border: 0; background: none; }
.running { border-bottom: 2px solid #76b9ed; padding-top: 2px; }
.active { margin-left: 3px; background: linear-gradient(to right, #575252 44px, #3c3838 44px); }
.narrow { width: 40px; margin: 0 4px 0 6px; }
.clock { display: flex; flex-direction: column; align-items: center; width: 52px; margin-left: auto; padding-top: 2px; font-size: 11px; line-height: 18px; }
```
